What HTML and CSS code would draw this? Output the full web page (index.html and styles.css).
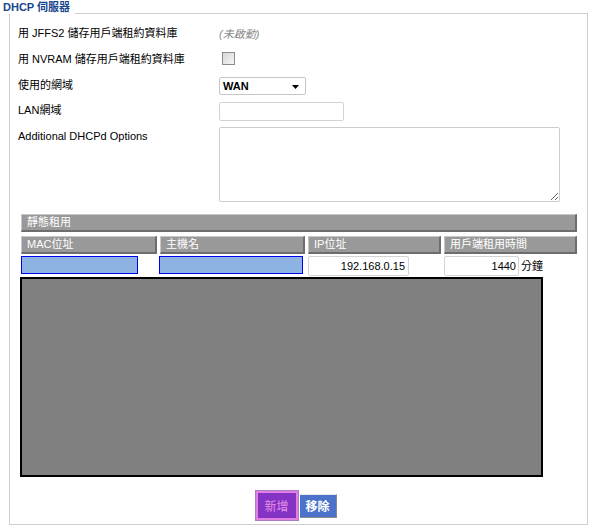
FILE: index.html
```html
<!DOCTYPE html>
<html lang="zh-Hant">
<head>
<meta charset="utf-8">
<title>DHCP 伺服器</title>
<link rel="stylesheet" href="styles.css">
</head>
<body>
<div class="dhcp">
  <div class="head">
    <h2 class="title">DHCP 伺服器</h2>
    <span class="rule"></span>
  </div>
  <div class="panel">
    <div class="form">
      <div class="row r1">
        <span class="label">用 JFFS2 儲存用戶端租約資料庫</span>
        <span class="note">(未啟動)</span>
      </div>
      <div class="row r2">
        <span class="label">用 NVRAM 儲存用戶端租約資料庫</span>
        <input type="checkbox" class="check">
      </div>
      <div class="row r3">
        <span class="label">使用的網域</span>
        <div class="select"><span>WAN</span><svg class="arrow" width="7" height="4" viewBox="0 0 7 4"><path d="M0 0H7L3.5 4Z" fill="#000"/></svg></div>
      </div>
      <div class="row r4">
        <span class="label">LAN網域</span>
        <input type="text" class="text lan">
      </div>
      <div class="row r5">
        <span class="label">Additional DHCPd Options</span>
        <textarea class="opts"></textarea>
      </div>
    </div>

    <div class="static">
      <div class="bar">靜態租用</div>
      <div class="grid cols">
        <div class="th">MAC位址</div>
        <div class="th">主機名</div>
        <div class="th">IP位址</div>
        <div class="th">用戶端租用時間</div>
      </div>
      <div class="grid entry">
        <div class="cell"><input type="text" class="text sel mac"></div>
        <div class="cell"><input type="text" class="text sel host"></div>
        <div class="cell"><input type="text" class="text ip" value="192.168.0.15"></div>
        <div class="cell"><input type="text" class="text lease" value="1440"><span class="unit">分鐘</span></div>
      </div>
      <div class="list"></div>
    </div>

    <div class="actions">
      <button class="btn add">新增</button>
      <button class="btn remove">移除</button>
    </div>
  </div>
</div>
</body>
</html>
```

FILE: styles.css
```css
html, body {
  margin: 0;
  padding: 0;
  background: #fff;
}
body {
  font-family: "Liberation Sans", "Noto Sans CJK TC", sans-serif;
  font-size: 11px;
  color: #000;
}
.dhcp {
  width: 595px;
}
.head {
  display: flex;
  align-items: flex-end;
  height: 14px;
  margin: 0 7px 0 3px;
}
.title {
  margin: 0;
  font-size: 11px;
  line-height: 14px;
  font-weight: bold;
  color: #17468f;
  white-space: nowrap;
}
.rule {
  flex: 1;
  height: 14px;
  margin-left: 5px;
  border-bottom: 1px solid #cfcfcf;
  box-sizing: border-box;
}
.panel {
  margin: 0 7px 0 9px;
  border: 1px solid #cfcfcf;
  border-top: 0;
  height: 511px;
  box-sizing: border-box;
  display: flex;
  flex-direction: column;
}
.form {
  padding: 6px 0 0 8px;
}
.row {
  display: flex;
  align-items: center;
}
.r1, .r2, .r3 { height: 26px; }
.r4 { height: 25px; }
.r5 {
  align-items: flex-start;
  padding-top: 4px;
}
.label {
  width: 201px;
  flex: none;
  line-height: 13px;
  white-space: nowrap;
}
.r5 .label { margin-top: 3px; }
.note {
  color: #8a8a8a;
  font-style: italic;
}
.check {
  appearance: none;
  -webkit-appearance: none;
  width: 13px;
  height: 13px;
  margin: 0 0 2px 3px;
  border: 1px solid #8c8c8c;
  background: linear-gradient(135deg, #d6d6d6, #f7f7f7);
  box-sizing: border-box;
}
.select {
  width: 87px;
  height: 18px;
  margin-top: 2px;
  box-sizing: border-box;
  border: 1px solid #c6c6c6;
  border-radius: 2px;
  display: flex;
  align-items: center;
  justify-content: space-between;
  padding: 0 6px 0 3px;
  font-weight: bold;
}
.arrow { display: block; margin-top: 1px; }
.text {
  box-sizing: border-box;
  margin: 0;
  border: 1px solid #d4d4d4;
  border-radius: 2px;
  font-family: inherit;
  font-size: 11px;
  background: #fff;
  outline: none;
}
.lan {
  width: 125px;
  height: 19px;
  margin-top: 2px;
}
.opts {
  width: 341px;
  height: 75px;
  box-sizing: border-box;
  margin: 0;
  border: 1px solid #cdcdcd;
  border-radius: 2px;
  font-family: inherit;
  font-size: 11px;
}
.static {
  margin: 12px 10px 0 11px;
}
.bar {
  height: 18px;
  box-sizing: border-box;
  background: #999;
  border-style: solid;
  border-width: 1px 2px 2px 1px;
  border-color: #c8c8c8 #6d6d6d #6d6d6d #c8c8c8;
  color: #fff;
  padding-left: 5px;
  line-height: 15px;
}
.grid {
  display: grid;
  grid-template-columns: 136px 145px 133px 133px;
  column-gap: 3px;
}
.cols { margin-top: 4px; }
.th {
  height: 18px;
  box-sizing: border-box;
  background: #999;
  border-style: solid;
  border-width: 1px 2px 2px 1px;
  border-color: #c8c8c8 #6d6d6d #6d6d6d #c8c8c8;
  color: #fff;
  padding-left: 5px;
  line-height: 15px;
  white-space: nowrap;
}
.entry { margin-top: 2px; }
.cell {
  display: flex;
  align-items: flex-start;
}
.sel {
  height: 18px;
  border: 1px solid #0000f0;
  border-radius: 0;
  background: #8db3e2;
}
.mac { width: 117px; }
.host { width: 144px; margin-left: -1px; }
.ip {
  width: 101px;
  height: 20px;
  text-align: right;
  padding: 0 3px 0 0;
}
.lease {
  width: 75px;
  height: 20px;
  text-align: right;
  padding: 0 2px 0 0;
}
.unit {
  margin-left: 2px;
  line-height: 20px;
}
.list {
  width: 523px;
  height: 200px;
  box-sizing: border-box;
  margin: 1px 0 0 -1px;
  background: #808080;
  border: 2px solid #000;
}
.actions {
  display: flex;
  justify-content: center;
  align-items: center;
  gap: 1px;
  margin-top: 13px;
  padding-right: 6px;
}
.btn {
  font-family: "Liberation Sans", "Noto Sans CJK TC", sans-serif;
  font-size: 12px;
  margin: 0;
  padding: 0;
  cursor: pointer;
}
.add {
  width: 44px;
  height: 31px;
  box-sizing: border-box;
  background: #8434c4;
  color: #e58fe5;
  border: 3px solid #e27fe2;
  outline: 1px solid #a97bc6;
  outline-offset: -1px;
}
.remove {
  width: 37px;
  height: 24px;
  box-sizing: border-box;
  background: #4b73cb;
  color: #fff;
  border: 0;
  border-right: 1px solid #8a8a8a;
  border-bottom: 1px solid #8a8a8a;
  border-top: 1px solid #e8e8e8;
  font-weight: bold;
}
```
